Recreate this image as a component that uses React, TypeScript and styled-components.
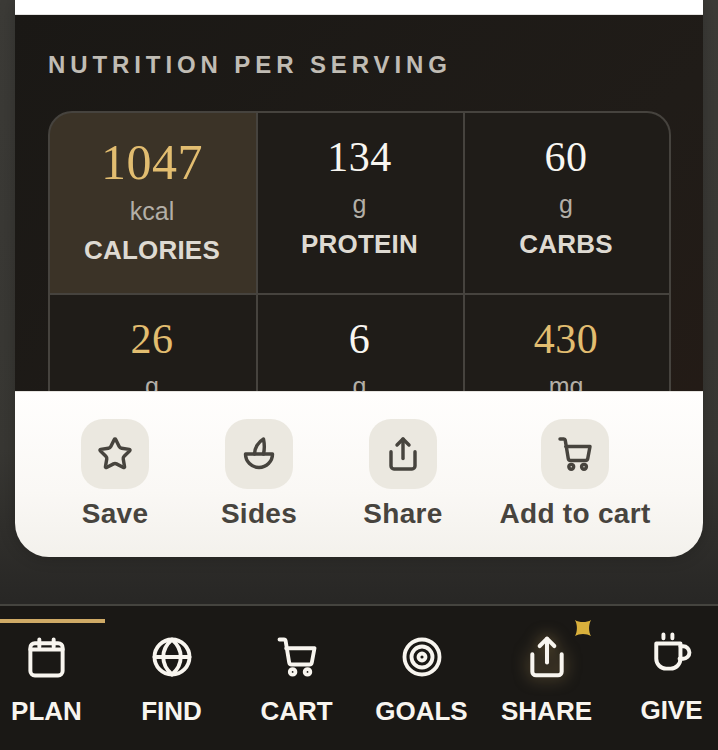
import styled, { createGlobalStyle } from 'styled-components';
import { Star, Target } from 'lucide-react';

const GlobalStyle = createGlobalStyle`
	html, body {
		margin: 0;
		padding: 0;
		height: 100%;
	}
	body {
		font-family: 'Liberation Sans', Arial, sans-serif;
		background: #2a2926;
		overflow: hidden;
	}
	* {
		box-sizing: border-box;
	}
`;

const nutrients = [
	{ value: '1047', unit: 'kcal', label: 'CALORIES', tone: 'hero' },
	{ value: '134', unit: 'g', label: 'PROTEIN', tone: 'plain' },
	{ value: '60', unit: 'g', label: 'CARBS', tone: 'plain' },
	{ value: '26', unit: 'g', label: 'FAT', tone: 'gold' },
	{ value: '6', unit: 'g', label: 'FIBER', tone: 'plain' },
	{ value: '430', unit: 'mg', label: 'SODIUM', tone: 'gold' },
];

type IconProps = { size: number; weight?: number };

function Icon({ size, weight = 2.3, children }: IconProps & { children: React.ReactNode }) {
	return (
		<svg width={size} height={size} viewBox='0 0 24 24' fill='none' stroke='currentColor' strokeWidth={weight} strokeLinecap='round' strokeLinejoin='round'>
			{children}
		</svg>
	);
}

function BowlIcon(props: IconProps) {
	return (
		<Icon {...props}>
			<path d='M3 12h18a9 9 0 0 1-18 0Z' />
			<path d='M9 12C9 8 11.500 4 15 2c.7 3.500.7 7 0 10' />
		</Icon>
	);
}

function ShareIcon(props: IconProps) {
	return (
		<Icon {...props}>
			<path d='M4 10.500V20a2 2 0 0 0 2 2h12a2 2 0 0 0 2-2v-9.500' />
			<path d='M16 6l-4-4-4 4' />
			<path d='M12 2v13' />
		</Icon>
	);
}

function CartIcon(props: IconProps) {
	return (
		<Icon {...props}>
			<path d='M2 2h2.500a1 1 0 0 1 1 .8L7.500 15a1.500 1.500 0 0 0 1.500 1.300h10a1.500 1.500 0 0 0 1.500-1.300L22 7H5.800' />
			<circle cx='9.500' cy='20.500' r='1.600' />
			<circle cx='18' cy='20.500' r='1.600' />
		</Icon>
	);
}

function CalendarIcon(props: IconProps) {
	return (
		<Icon {...props}>
			<rect x='3' y='4' width='18' height='18' rx='2.500' />
			<path d='M8 2v4M16 2v4M3 7.500h18' />
		</Icon>
	);
}

function GlobeIcon(props: IconProps) {
	return (
		<Icon {...props}>
			<circle cx='12' cy='12' r='10' />
			<path d='M2 12h20' />
			<path d='M12 2c3.500 3 5 6.500 5 10s-1.500 7-5 10c-3.500-3-5-6.500-5-10s1.500-7 5-10Z' />
		</Icon>
	);
}

function CupIcon(props: IconProps) {
	return (
		<Icon {...props}>
			<path d='M3.500 7H17v8.500a5.500 5.500 0 0 1-5.500 5.500H9a5.500 5.500 0 0 1-5.500-5.500Z' />
			<path d='M17 8.500h1.500a3.500 3.500 0 0 1 0 7H16.500' />
			<path d='M7.500 2v2M12.500 2v2' />
		</Icon>
	);
}

export default function App() {
	return (
		<Screen>
			<GlobalStyle />
			<Card>
				<TopStrip />
				<NutritionPanel>
					<SectionTitle>NUTRITION PER SERVING</SectionTitle>
					<StatGrid>
						{nutrients.map((item) => (
							<StatCell key={item.label} $tone={item.tone}>
								<StatValue $tone={item.tone}>{item.value}</StatValue>
								<StatUnit $tone={item.tone}>{item.unit}</StatUnit>
								<StatLabel $tone={item.tone}>{item.label}</StatLabel>
							</StatCell>
						))}
					</StatGrid>
				</NutritionPanel>
				<ActionBar>
					<ActionItem>
						<ActionIcon><Star size={36} strokeWidth={2.3} /></ActionIcon>
						<ActionLabel>Save</ActionLabel>
					</ActionItem>
					<ActionItem>
						<ActionIcon><BowlIcon size={36} /></ActionIcon>
						<ActionLabel>Sides</ActionLabel>
					</ActionItem>
					<ActionItem>
						<ActionIcon><ShareIcon size={36} /></ActionIcon>
						<ActionLabel>Share</ActionLabel>
					</ActionItem>
					<ActionItem>
						<ActionIcon><CartIcon size={36} /></ActionIcon>
						<ActionLabel>Add to cart</ActionLabel>
					</ActionItem>
				</ActionBar>
			</Card>
			<BottomNav>
				<ActiveBar />
				<NavItem>
					<NavIcon><CalendarIcon size={43} weight={2.2} /></NavIcon>
					<NavLabel>PLAN</NavLabel>
				</NavItem>
				<NavItem>
					<NavIcon><GlobeIcon size={42} weight={2.2} /></NavIcon>
					<NavLabel>FIND</NavLabel>
				</NavItem>
				<NavItem>
					<NavIcon><CartIcon size={42} weight={2.2} /></NavIcon>
					<NavLabel>CART</NavLabel>
				</NavItem>
				<NavItem>
					<NavIcon><Target size={42} strokeWidth={2.2} /></NavIcon>
					<NavLabel>GOALS</NavLabel>
				</NavItem>
				<NavItem>
					<NavIcon $glow><ShareIcon size={44} weight={2.2} /></NavIcon>
					<Sparkle viewBox='0 0 20 20'>
						<path d='M1 1C6 4 14 4 19 1C16 6 16 14 19 19C14 16 6 16 1 19C4 14 4 6 1 1Z' />
					</Sparkle>
					<NavLabel>SHARE</NavLabel>
				</NavItem>
				<NavItem $raised>
					<NavIcon><CupIcon size={43} weight={2.2} /></NavIcon>
					<NavLabel>GIVE</NavLabel>
				</NavItem>
			</BottomNav>
		</Screen>
	);
}

const Screen = styled.div`
	display: flex;
	flex-direction: column;
	width: 718px;
	height: 750px;
	overflow: hidden;
	background: linear-gradient(180deg, #3c3b37 0%, #383733 60%, #282725 80%);
`;

const Card = styled.div`
	display: flex;
	flex-direction: column;
	flex: 0 0 557px;
	margin: 0 15px;
	border-radius: 0 0 34px 34px;
	overflow: hidden;
	box-shadow: 0 0 16px rgba(0, 0, 0, 0.22);
`;

const TopStrip = styled.div`
	flex: 0 0 15px;
	background: #fff;
	border-bottom: 1px solid #e3e2e0;
`;

const NutritionPanel = styled.section`
	flex: 0 0 376px;
	padding: 37px 33px 0;
	overflow: hidden;
	background: linear-gradient(135deg, #1a1815 0%, #201c18 70%, #231b16 100%);
`;

const SectionTitle = styled.h2`
	margin: 0;
	font-size: 24px;
	line-height: 26px;
	font-weight: 700;
	letter-spacing: 4.9px;
	color: #c0bcb4;
`;

const StatGrid = styled.div`
	display: grid;
	grid-template-columns: 206px 205px 204px;
	grid-auto-rows: 180px;
	gap: 1.5px 2px;
	margin-top: 33px;
	width: 623px;
	border: 2px solid #46433e;
	border-radius: 24px;
	overflow: hidden;
	background: #46433e;
`;

const StatCell = styled.div<{ $tone: string }>`
	display: flex;
	flex-direction: column;
	align-items: center;
	padding: ${(props) => (props.$tone === 'hero' ? '21px' : '20px')} 2px 0 0;
	background: ${(props) => (props.$tone === 'hero' ? '#3b3327' : '#1f1c18')};
`;

const StatValue = styled.div<{ $tone: string }>`
	font-family: 'Liberation Serif', 'Times New Roman', serif;
	font-size: ${(props) => (props.$tone === 'hero' ? '50px' : '42px')};
	line-height: ${(props) => (props.$tone === 'hero' ? '56px' : '48px')};
	letter-spacing: 0.5px;
	color: ${(props) => (props.$tone === 'plain' ? '#f8f6f1' : '#e2bd70')};
`;

const StatUnit = styled.div<{ $tone: string }>`
	margin-top: ${(props) => (props.$tone === 'hero' ? '7px' : '9px')};
	font-size: 25px;
	line-height: 28px;
	color: #b3afa7;
`;

const StatLabel = styled.div<{ $tone: string }>`
	margin-top: ${(props) => (props.$tone === 'hero' ? '10px' : '11px')};
	font-size: 26px;
	line-height: 30px;
	font-weight: 700;
	letter-spacing: 0.2px;
	color: #dedad2;
`;

const ActionBar = styled.div`
	display: grid;
	grid-template-columns: repeat(3, 144px) 200px;
	flex: 0 0 166px;
	padding: 27px 28px 0;
	background: linear-gradient(180deg, #fffefd 0%, #faf8f5 60%, #f3f1ec 100%);
	border-top: 1px solid #e6e4e0;
`;

const ActionItem = styled.button`
	display: flex;
	flex-direction: column;
	align-items: center;
	height: fit-content;
	padding: 0;
	border: 0;
	background: none;
	font: inherit;
	color: #47443e;
`;

const ActionIcon = styled.span`
	display: flex;
	align-items: center;
	justify-content: center;
	width: 68px;
	height: 70px;
	border-radius: 22px;
	background: #ebe8e0;
`;

const ActionLabel = styled.span`
	margin-top: 9px;
	font-size: 28px;
	line-height: 32px;
	font-weight: 700;
	letter-spacing: 0.3px;
`;

const BottomNav = styled.nav`
	position: relative;
	display: flex;
	justify-content: center;
	flex: 0 0 146px;
	margin-top: 47px;
	background: #1a1815;
	border-top: 2px solid #45443f;
`;

const ActiveBar = styled.span`
	position: absolute;
	top: 13px;
	left: 0;
	width: 105px;
	height: 4px;
	background: #cfaa66;
`;

const NavItem = styled.div<{ $raised?: boolean }>`
	position: relative;
	flex: 0 0 125px;
	display: flex;
	flex-direction: column;
	align-items: center;
	gap: ${(props) => (props.$raised ? '22px' : '18px')};
	padding-top: ${(props) => (props.$raised ? '24px' : '29px')};
	color: #f8f5ef;
`;

const NavIcon = styled.span<{ $glow?: boolean }>`
	display: flex;
	align-items: center;
	justify-content: center;
	height: 44px;
	${(props) => props.$glow && 'filter: drop-shadow(0 0 8px rgba(224, 186, 110, 0.55));'}
`;

const NavLabel = styled.span`
	font-size: 26px;
	line-height: 28px;
	font-weight: 700;
`;

const Sparkle = styled.svg`
	position: absolute;
	top: 13px;
	left: 90px;
	width: 18px;
	height: 18px;
	fill: #d9b03c;
`;
